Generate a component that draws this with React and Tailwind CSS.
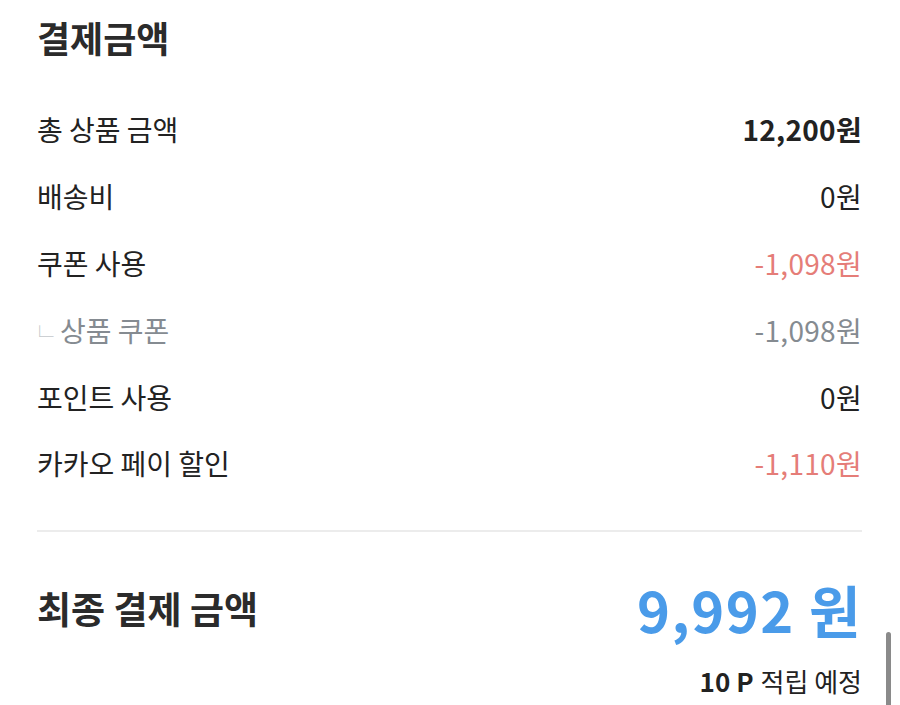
const rows = [
  { label: "총 상품 금액", value: "12,200원", valueClass: "font-bold text-[#222]" },
  { label: "배송비", value: "0원", valueClass: "text-[#222]" },
  { label: "쿠폰 사용", value: "-1,098원", valueClass: "text-[#e57d78]" },
  { label: "상품 쿠폰", value: "-1,098원", valueClass: "text-[#858b91]", sub: true },
  { label: "포인트 사용", value: "0원", valueClass: "text-[#222]" },
  { label: "카카오 페이 할인", value: "-1,110원", valueClass: "text-[#e57d78]" },
];

export default function App() {
  return (
    <div
      className="relative h-[705px] w-[900px] overflow-hidden bg-white pl-[37px] pr-[38px] text-[#222]"
      style={{ fontFamily: '"Noto Sans CJK KR", "Noto Sans", sans-serif' }}
    >
      {/* title */}
      <h1 className="pt-[14px] text-[36px] font-bold leading-[46px] text-[#2b2b2b]">
        결제금액
      </h1>

      {/* summary rows */}
      <div className="mt-[36px] flex flex-col">
        {rows.map((row) => (
          <div key={row.label} className="flex h-[66.8px] items-center justify-between">
            {row.sub ? (
              <span className="flex items-center text-[28px] text-[#858b91]">
                <span className="-ml-[3px] mr-[2px] text-[26px] leading-[30px] font-thin text-[#c4c8cc]">ㄴ</span>
                {row.label}
              </span>
            ) : (
              <span className="text-[28px]">{row.label}</span>
            )}
            <span className={"text-[28px] tracking-[0.3px] " + row.valueClass}>{row.value}</span>
          </div>
        ))}
      </div>

      <div className="mt-[33px] h-[2px] bg-[#ececec]" />

      {/* final amount */}
      <div className="mt-[45px] flex items-center justify-between">
        <span className="text-[37px] font-bold text-[#2b2b2b]">최종 결제 금액</span>
        <span className="text-[56px] font-bold leading-[64px] tracking-[1.5px] text-[#4a9be9]">9,992 원</span>
      </div>
      <div className="mt-[22px] flex justify-end text-[26px] leading-[36px] text-[#222]">
        <span className="font-bold">10 P</span>
        <span className="ml-[7px]">적립 예정</span>
      </div>

      {/* scroll indicator */}
      <div className="absolute left-[886px] top-[632px] h-[90px] w-[5px] rounded-full bg-[#8a8a8a]" />
    </div>
  );
}
